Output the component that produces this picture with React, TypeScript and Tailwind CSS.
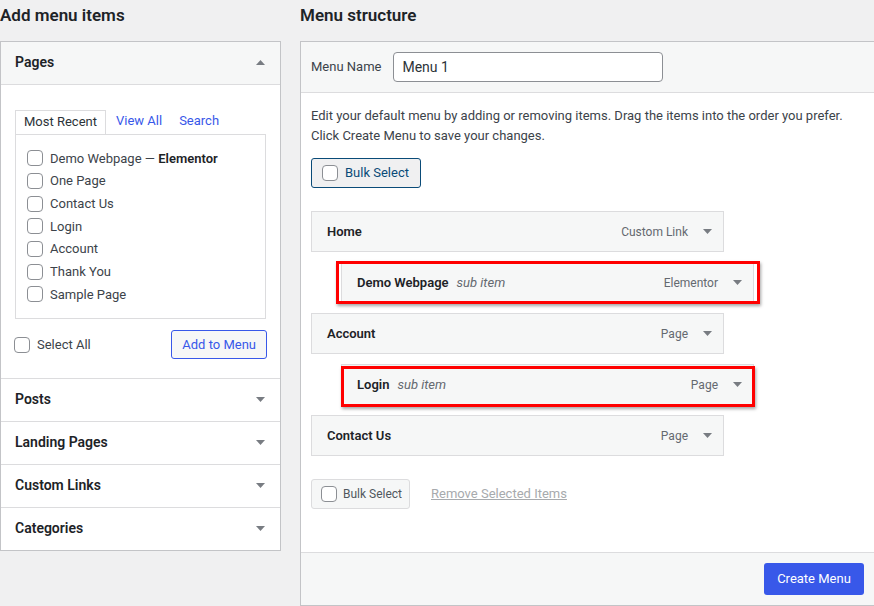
import React from "react";

const pages = [
  { label: "Demo Webpage", extra: "Elementor" },
  { label: "One Page" },
  { label: "Contact Us" },
  { label: "Login" },
  { label: "Account" },
  { label: "Thank You" },
  { label: "Sample Page" },
];

const sections = ["Posts", "Landing Pages", "Custom Links", "Categories"];

type MenuItem = {
  title: string;
  type: string;
  sub?: boolean;
  highlight?: "a" | "b";
};

const menuItems: MenuItem[] = [
  { title: "Home", type: "Custom Link" },
  { title: "Demo Webpage", type: "Elementor", sub: true, highlight: "a" },
  { title: "Account", type: "Page" },
  { title: "Login", type: "Page", sub: true, highlight: "b" },
  { title: "Contact Us", type: "Page" },
];

function Checkbox({ className = "" }: { className?: string }) {
  return (
    <span
      className={`inline-block w-4 h-4 shrink-0 rounded-[4px] border border-[#8c8f94] bg-white ${className}`}
    />
  );
}

function Arrow({ up = false }: { up?: boolean }) {
  return (
    <svg width="9" height="5" viewBox="0 0 9 5" className="shrink-0">
      <polygon
        points={up ? "0,5 9,5 4.5,0" : "0,0 9,0 4.5,5"}
        fill="#787c82"
      />
    </svg>
  );
}

function MenuRow({ item }: { item: MenuItem }) {
  return (
    <div className={`relative w-[413px] mb-[10px] ${item.sub ? "ml-[30px]" : ""}`}>
      <div className="h-[41px] w-[413px] flex items-center justify-between bg-[#f6f7f7] border border-[#dcdcde] pl-[15px] pr-[11px]">
        <div className="flex items-baseline">
          <span className="font-semibold text-[#1d2327]">{item.title}</span>
          {item.sub && (
            <span className="italic text-[#646970] ml-[8px]">sub item</span>
          )}
        </div>
        <div className="flex items-center gap-[15px]">
          <span className="text-[#646970] text-[12px]">{item.type}</span>
          <Arrow />
        </div>
      </div>
      {item.highlight === "a" && (
        <div className="absolute left-[-5px] right-[-6px] top-[-1px] bottom-[-1px] border-[3px] border-[#ff0000] shadow-[1px_2px_3px_rgba(0,0,0,0.35)]" />
      )}
      {item.highlight === "b" && (
        <div className="absolute left-[0px] right-[-1px] top-[2px] bottom-[-2px] border-[3px] border-[#ff0000] shadow-[1px_2px_3px_rgba(0,0,0,0.35)]" />
      )}
    </div>
  );
}

export default function App() {
  return (
    <div
      className="w-[874px] h-[606px] overflow-hidden bg-[#f0f0f1] flex text-[13px] text-[#3c434a]"
      style={{ fontFamily: "Roboto, 'Liberation Sans', sans-serif" }}
    >
      {/* left column */}
      <div className="w-[281px] shrink-0">
        <h2 className="h-[41px] leading-[30px] text-[17px] font-semibold text-[#1d2327]">
          Add menu items
        </h2>
        <div className="border border-[#c3c4c7] bg-white">
          <div className="h-[43px] bg-[#f6f7f7] border-b border-[#dcdcde] flex items-center justify-between pl-[14px] pr-[15px] pb-[2px]">
            <span className="text-[14px] font-semibold text-[#1d2327]">
              Pages
            </span>
            <Arrow up />
          </div>
          <div className="pt-[25px] px-[14px] pb-[19px]">
            <div className="flex items-end h-[24px]">
              <div className="h-[24px] px-[8px] pb-[1px] border border-b-0 border-[#dcdcde] bg-white flex items-center text-[#2c3338]">
                Most Recent
              </div>
              <span className="ml-[10px] mb-[4px] text-[#3858e9]">
                View All
              </span>
              <span className="ml-[17px] mb-[4px] text-[#3858e9]">Search</span>
            </div>
            <div className="h-[185px] border border-[#dcdcde] pt-[12px] pl-[11px]">
              {pages.map((p) => (
                <div key={p.label} className="h-[22.67px] flex items-center">
                  <Checkbox />
                  <span className="ml-[7px]">
                    {p.label}
                    {p.extra && (
                      <>
                        {" — "}
                        <span className="font-semibold text-[#1d2327]">
                          {p.extra}
                        </span>
                      </>
                    )}
                  </span>
                </div>
              ))}
            </div>
            <div className="mt-[11px] flex items-center justify-between">
              <div className="flex items-center -ml-[1px] mt-[1px]">
                <Checkbox />
                <span className="ml-[7px]">Select All</span>
              </div>
              <button className="h-[29px] px-[10px] rounded-[3px] border border-[#3858e9] bg-[#f6f7f7] text-[#3858e9] text-[13px] mr-[-1px]">
                Add to Menu
              </button>
            </div>
          </div>
          {sections.map((s) => (
            <div
              key={s}
              className="h-[43px] border-t border-[#dcdcde] flex items-center justify-between pl-[14px] pr-[15px] pb-[2px]"
            >
              <span className="text-[14px] font-semibold text-[#1d2327]">
                {s}
              </span>
              <Arrow />
            </div>
          ))}
        </div>
      </div>

      {/* right column */}
      <div className="ml-[19px] flex-1 flex flex-col min-w-0">
        <h2 className="h-[41px] leading-[30px] text-[17px] font-semibold text-[#1d2327] shrink-0">
          Menu structure
        </h2>
        <div className="flex-1 flex flex-col border border-r-0 border-[#c3c4c7] bg-white">
          <div className="h-[51px] shrink-0 bg-[#f6f7f7] border-b border-[#dcdcde] flex items-center pl-[10px]">
            <span className="text-[13px]">Menu Name</span>
            <div className="ml-[12px] w-[270px] h-[30px] rounded-[4px] border border-[#8c8f94] bg-white flex items-center pl-[8px] text-[14px] text-[#2c3338]">
              Menu 1
            </div>
          </div>
          <div className="flex-1 pt-[13px] pl-[10px]">
            <p className="leading-[19.5px]">
              Edit your default menu by adding or removing items. Drag the
              items into the order you prefer.
              <br />
              Click Create Menu to save your changes.
            </p>
            <button className="mt-[13px] h-[30px] w-[110px] flex items-center pl-[10px] rounded-[3px] border border-[#0a4b78] bg-[#f0f0f1] text-[#0a4b78] text-[13px]">
              <Checkbox />
              <span className="ml-[7px]">Bulk Select</span>
            </button>
            <div className="mt-[23px]">
              {menuItems.map((it) => (
                <MenuRow key={it.title} item={it} />
              ))}
            </div>
            <div className="mt-[23px] flex items-center">
              <button className="h-[30px] w-[99px] flex items-center pl-[9px] rounded-[3px] border border-[#dcdcde] bg-[#f6f7f7] text-[#50575e] text-[12px]">
                <Checkbox />
                <span className="ml-[6px]">Bulk Select</span>
              </button>
              <span className="ml-[21px] underline text-[#a7aaad]">
                Remove Selected Items
              </span>
            </div>
          </div>
          <div className="h-[53px] shrink-0 bg-[#f6f7f7] border-t border-[#dcdcde] flex items-center justify-end pr-[10px]">
            <button className="h-[32px] w-[100px] rounded-[3px] bg-[#3858e9] text-white text-[13px]">
              Create Menu
            </button>
          </div>
        </div>
      </div>
    </div>
  );
}
